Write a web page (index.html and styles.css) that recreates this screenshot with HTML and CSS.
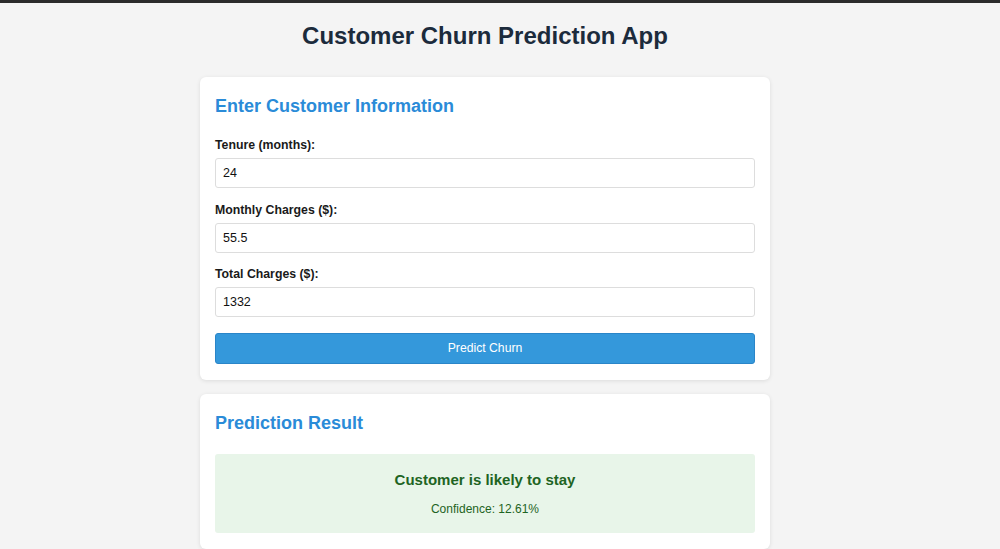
FILE: index.html
```html
<!DOCTYPE html>
<html lang="en">
<head>
<meta charset="utf-8">
<title>Customer Churn Prediction App</title>
<link rel="stylesheet" href="styles.css">
</head>
<body>
<div class="topbar"></div>
<div class="page">
  <h1 class="title">Customer Churn Prediction App</h1>
  <div class="card">
    <h2 class="card-title">Enter Customer Information</h2>
    <form class="form">
      <div class="field">
        <label class="label" for="tenure">Tenure (months):</label>
        <input class="input" id="tenure" type="text" value="24">
      </div>
      <div class="field">
        <label class="label" for="monthly">Monthly Charges ($):</label>
        <input class="input" id="monthly" type="text" value="55.5">
      </div>
      <div class="field">
        <label class="label" for="total">Total Charges ($):</label>
        <input class="input" id="total" type="text" value="1332">
      </div>
      <button class="button" type="button">Predict Churn</button>
    </form>
  </div>
  <div class="card">
    <h2 class="card-title">Prediction Result</h2>
    <div class="result">
      <div class="result-title">Customer is likely to stay</div>
      <div class="result-conf">Confidence: 12.61%</div>
    </div>
  </div>
</div>
</body>
</html>
```

FILE: styles.css
```css
html, body {
  margin: 0;
  padding: 0;
}
body {
  background: #f4f4f4;
  font-family: "Liberation Sans", Arial, sans-serif;
  color: #222;
  height: 549px;
  overflow: hidden;
}
.topbar {
  height: 3px;
  background: #2b2b2b;
}
.page {
  width: 570px;
  margin: 0 auto;
  padding-right: 30px;
}
.title {
  margin: 19px 0 27px;
  font-size: 24px;
  line-height: 28px;
  text-align: center;
  color: #1c2b3c;
  font-weight: bold;
}
.card {
  background: #fff;
  border-radius: 6px;
  box-shadow: 0 1px 4px rgba(0, 0, 0, 0.1);
  padding: 17px 15px 16px;
  margin-bottom: 14px;
}
.card-title {
  margin: 0 0 19px;
  font-size: 18px;
  line-height: 24px;
  color: #2a8bd8;
  font-weight: bold;
}
.field {
  margin-bottom: 13.5px;
}
.label {
  display: block;
  font-size: 12.3px;
  line-height: 16px;
  font-weight: bold;
  color: #1a1a1a;
  margin-bottom: 5px;
}
.input {
  display: block;
  width: 100%;
  box-sizing: border-box;
  height: 30px;
  border: 1px solid #ddd;
  border-radius: 3px;
  padding: 0 7px;
  font-family: "Liberation Sans", Arial, sans-serif;
  font-size: 12.5px;
  color: #111;
  background: #fff;
}
.button {
  display: block;
  width: 100%;
  height: 31px;
  margin-top: 15.5px;
  background: #3498db;
  color: #fff;
  border: 1px solid #2a85c8;
  border-radius: 3px;
  font-family: "Liberation Sans", Arial, sans-serif;
  font-size: 12.2px;
}
.result {
  background: #e8f5e9;
  border-radius: 3px;
  padding: 16px 10px 16px;
  text-align: center;
  color: #1e6423;
}
.result-title {
  font-size: 15px;
  line-height: 19px;
  font-weight: bold;
  margin-bottom: 13px;
}
.result-conf {
  font-size: 12px;
  line-height: 15px;
}
```
